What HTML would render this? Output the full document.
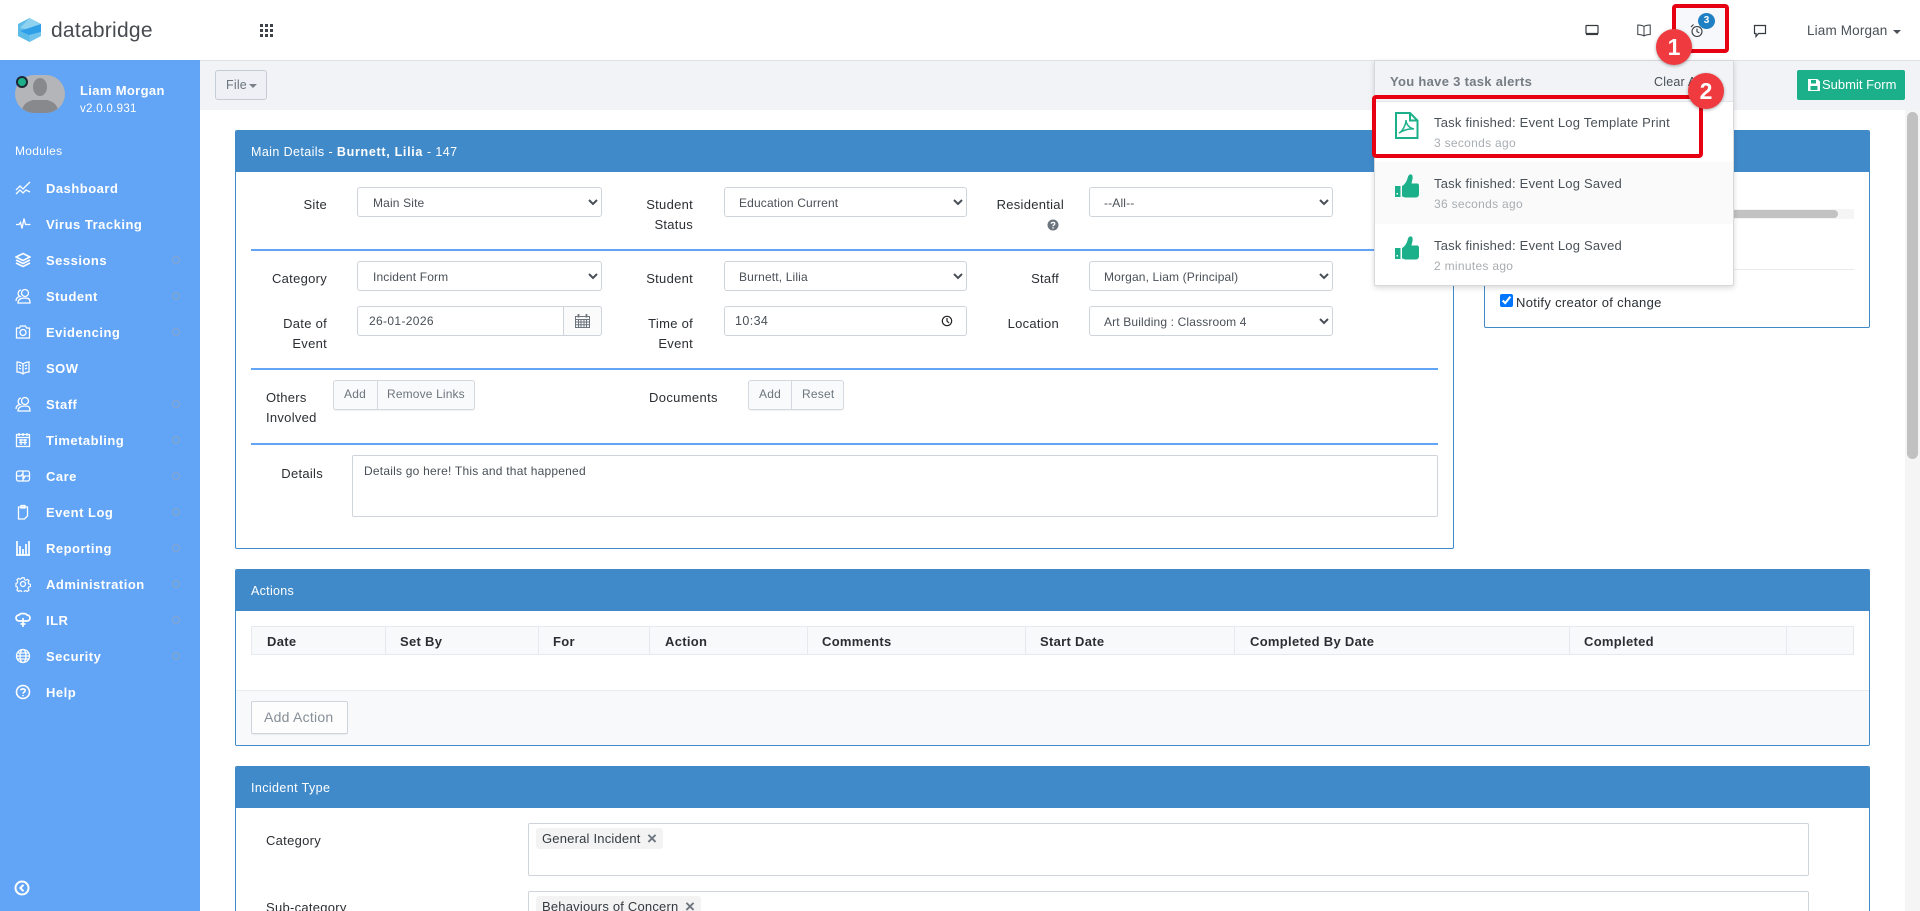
<!DOCTYPE html>
<html lang="en"><head><meta charset="utf-8"><title>databridge</title>
<style>
*{box-sizing:border-box}
html,body{margin:0;padding:0;width:1920px;height:911px;overflow:hidden;background:#fff;font-family:"Liberation Sans",Arial,sans-serif;font-size:13px;color:#212529}
#w{position:relative;width:1920px;height:911px;overflow:hidden}
.a{position:absolute}
.t{position:absolute;white-space:nowrap;line-height:16px;height:16px;margin-top:-7px;letter-spacing:.2px}
.l{color:#2b2f33;font-size:13px;letter-spacing:.28px}
.nav{color:#fff;font-weight:bold;font-size:13px;left:46px;letter-spacing:.5px}
.ic{position:absolute;left:15px;width:16px;height:16px;fill:none;stroke:#fff;stroke-width:1.3}
.dot{position:absolute;left:172px;width:8px;height:8px;border:1px solid #8aa5c9;border-radius:50%}
.panel{position:absolute;border:1px solid #418ac9;border-radius:2px;background:#fff;overflow:hidden}
.ph{position:absolute;left:0;top:0;right:0;height:41px;background:#418ac9}
.hr{position:absolute;height:2px;background:#62a4f5;left:251px;width:1187px}
select{position:absolute;height:30px;border:1px solid #ced4da;border-radius:3px;background:#fff;color:#495057;font:12px "Liberation Sans",Arial,sans-serif;letter-spacing:.15px;padding:2px 8px 0 10px}
.inp{position:absolute;height:30px;border:1px solid #ced4da;border-radius:3px;background:#fff}
.btn{position:absolute;height:30px;border:1px solid #d4d9df;border-radius:3px;background:#f9fafb;box-shadow:0 1px 1px rgba(0,0,0,.06)}
.sep{position:absolute;top:0;bottom:0;width:1px;background:#d4d9df}
.g{color:#6c757d;font-size:12px;margin-top:-8px}
.cell{position:absolute;top:0;height:27px;width:1px;background:#e6e9ee}
.th{font-weight:bold;color:#2b2f33;font-size:13px;top:641px;letter-spacing:.3px}
.tag{position:absolute;background:#f3f3f3;border-radius:3px;height:21px}
.box{position:absolute;left:528px;width:1281px;border:1px solid #ced4da;border-radius:2px;background:#fff}
.red{position:absolute;border:4px solid #e60012;border-radius:4px}
.num{position:absolute;width:36px;height:36px;border-radius:50%;background:#ef3b3f;color:#fff;font-weight:bold;font-size:23px;line-height:36px;text-align:center;box-shadow:0 1px 3px rgba(0,0,0,.35)}
.ti{font-size:13px;color:#495057;left:1434px;letter-spacing:.22px}
.tm{font-size:12px;color:#a9adb1;left:1434px;margin-top:-8px;letter-spacing:.3px}
.ph-t{color:#fff;font-size:12.5px;letter-spacing:.4px}
</style></head><body><div id="w">

<!-- header -->
<div class="a" style="left:0;top:0;width:1920px;height:61px;background:#fff;border-bottom:1px solid #dfe1e4"></div>
<svg class="a" style="left:17px;top:17px" width="25" height="26" viewBox="0 0 25 26">
<polygon points="12.5,1 24,7 24,19 12.5,25 1,19 1,7" fill="#5cbbe9"/>
<polygon points="12.5,1 24,7 15,13 3,11" fill="#8ed2ef"/>
<polygon points="3,14 24,7 24,15 12,18" fill="#2f9fe8"/>
<polygon points="12,18 24,15 24,19 12.5,25" fill="#6fc3ec"/>
</svg>
<div class="t" style="left:51px;top:30px;font-size:21px;color:#474b50;height:24px;line-height:24px;margin-top:-11px;letter-spacing:.25px">databridge</div>
<svg class="a" style="left:260px;top:24px" width="14" height="14" fill="#3d4348">
<rect x="0" y="0" width="3" height="3"/><rect x="5" y="0" width="3" height="3"/><rect x="10" y="0" width="3" height="3"/>
<rect x="0" y="5" width="3" height="3"/><rect x="5" y="5" width="3" height="3"/><rect x="10" y="5" width="3" height="3"/>
<rect x="0" y="10" width="3" height="3"/><rect x="5" y="10" width="3" height="3"/><rect x="10" y="10" width="3" height="3"/>
</svg>

<!-- sub bar -->
<div class="a" style="left:200px;top:61px;width:1720px;height:49px;background:#f1f3f7"></div>
<div class="a" style="left:215px;top:70px;width:52px;height:30px;background:#eef0f5;border:1px solid #c6ccd4;border-radius:3px"></div>
<div class="t g" style="left:226px;top:85px;font-size:12.5px">File</div>
<div class="a" style="left:249px;top:84px;border:4px solid transparent;border-top-color:#7a8087;border-bottom:0"></div>
<div class="a" style="left:1797px;top:70px;width:108px;height:30px;background:#1bb08a;border-radius:2px"></div>
<svg class="a" style="left:1808px;top:79px" width="12" height="12" viewBox="0 0 12 12" fill="#fff"><path fill-rule="evenodd" d="M0 0h9.5L12 2.5V12H0zM3 1v3.5h5V1zM2.500 7v4h7V7z"/></svg>
<div class="t" style="left:1822px;top:84px;color:#fff;font-size:13px;letter-spacing:0">Submit Form</div>

<!-- sidebar -->
<div class="a" style="left:0;top:60px;width:200px;height:851px;background:#62a4f5"></div>
<div class="a" style="left:15px;top:75px;width:50px;height:38px;background:#b3b5b8;border-radius:19px;overflow:hidden">
<svg width="50" height="38" viewBox="0 0 50 38" fill="#88898c"><ellipse cx="25" cy="12" rx="7" ry="9"/><path d="M7 38c0-8 4-11 11-13h14c7 2 11 5 11 13z"/></svg></div>
<div class="a" style="left:16px;top:76px;width:12px;height:12px;border-radius:50%;background:#1bb08a;border:2px solid #1d2733"></div>
<div class="t" style="left:80px;top:90px;color:#fff;font-weight:bold;font-size:13px;letter-spacing:.35px">Liam Morgan</div>
<div class="t" style="left:80px;top:108px;color:#fff;font-size:11.5px;letter-spacing:.3px">v2.0.0.931</div>
<div class="t" style="left:15px;top:150px;color:#fff;font-size:12px;letter-spacing:.3px">Modules</div>

<div class="t nav" style="top:188px">Dashboard</div>
<svg class="ic" style="top:180px" viewBox="0 0 16 16"><path d="M1 10l4-4 3 3 7-7M1 14l4-4 3 3 3-3 4 2"/></svg>
<div class="t nav" style="top:224px">Virus Tracking</div>
<svg class="ic" style="top:216px" viewBox="0 0 16 16"><path d="M1 8.500h3l1.500-2 1.500 6 2-10 1.500 6h5"/></svg>
<div class="t nav" style="top:260px">Sessions</div>
<svg class="ic" style="top:252px;stroke-width:1.6" viewBox="0 0 16 16"><path d="M8 1.500L15 5 8 8.500 1 5zM1 8l7 3.500L15 8M1 11l7 3.500 7-3.500"/></svg>
<div class="dot" style="top:256px"></div>
<div class="t nav" style="top:296px">Student</div>
<svg class="ic" style="top:288px" viewBox="0 0 16 16"><circle cx="10" cy="5" r="3.500"/><path d="M3 15c0-4 3-5 7-5s5 1 5 5zM6 2a3.500 3.500 0 0 0-1 6.500C2 9 1 11 1 13"/></svg>
<div class="dot" style="top:292px"></div>
<div class="t nav" style="top:332px">Evidencing</div>
<svg class="ic" style="top:324px" viewBox="0 0 16 16"><path d="M1.500 4h3l1-2h5l1 2h3v10h-13z"/><circle cx="8" cy="8.500" r="3"/></svg>
<div class="dot" style="top:328px"></div>
<div class="t nav" style="top:368px">SOW</div>
<svg class="ic" style="top:360px" viewBox="0 0 16 16"><path d="M8 4C6 2.500 4 2 2 2v10c2 0 4 .5 6 2 2-1.500 4-2 6-2V2c-2 0-4 .5-6 2zm0 0v10M4 5l2 1M4 8l2 1M10 6l2-1M10 9l2-1"/></svg>
<div class="t nav" style="top:404px">Staff</div>
<svg class="ic" style="top:396px" viewBox="0 0 16 16"><circle cx="10" cy="5" r="3.500"/><path d="M3 15c0-4 3-5 7-5s5 1 5 5zM6 2a3.500 3.500 0 0 0-1 6.500C2 9 1 11 1 13"/></svg>
<div class="dot" style="top:400px"></div>
<div class="t nav" style="top:440px">Timetabling</div>
<svg class="ic" style="top:432px" viewBox="0 0 16 16"><path d="M1.500 2.500h13v12h-13zM4 1v3M8 1v3M12 1v3M1.500 5.500h13M4 8h8M4 10.500h8M6 7v6M10 7v6"/></svg>
<div class="dot" style="top:436px"></div>
<div class="t nav" style="top:476px">Care</div>
<svg class="ic" style="top:468px" viewBox="0 0 16 16"><rect x="1.500" y="3" width="13" height="10" rx="2"/><path d="M1.500 8H6l1.500-2 1.500 4 1-2h4.500M8 3v10"/></svg>
<div class="dot" style="top:472px"></div>
<div class="t nav" style="top:512px">Event Log</div>
<svg class="ic" style="top:504px" viewBox="0 0 16 16"><path d="M3.500 3h9v9l-3 3h-6zM6 1.500h4V4H6z"/></svg>
<div class="dot" style="top:508px"></div>
<div class="t nav" style="top:548px">Reporting</div>
<svg class="ic" style="top:540px" viewBox="0 0 16 16"><path d="M2 1v14M5 6v9M8 9v6M11 4v11M14 1v14M1 15h14" stroke-width="1.700"/></svg>
<div class="dot" style="top:544px"></div>
<div class="t nav" style="top:584px">Administration</div>
<svg class="ic" style="top:576px" viewBox="0 0 16 16"><circle cx="8" cy="8" r="2.500"/><path d="M6.800 1h2.400l.4 2 1.700.8 1.800-1 1.600 1.700-1 1.700.7 1.800 2 .4v2.400l-2 .4-.7 1.700 1 1.800-1.700 1.600-1.700-1-1.800.7-.4 1.500H6.800l-.4-1.500-1.800-.7-1.700 1-1.700-1.600 1-1.800-.7-1.700-1.300-.4V7.300l1.300-.4.700-1.800-1-1.700 1.700-1.700 1.700 1 1.800-.8z" transform="translate(.8 .8) scale(.9)"/></svg>
<div class="dot" style="top:580px"></div>
<div class="t nav" style="top:620px">ILR</div>
<svg class="ic" style="top:612px;stroke-width:1.700" viewBox="0 0 16 16"><path d="M4 9a3 3 0 0 1 0-6c1-2 7-2 8 0a3 3 0 0 1 0 6zM8 6v9M5.500 12h5" /></svg>
<div class="dot" style="top:616px"></div>
<div class="t nav" style="top:656px">Security</div>
<svg class="ic" style="top:648px" viewBox="0 0 16 16"><circle cx="8" cy="8" r="6.500"/><ellipse cx="8" cy="8" rx="3" ry="6.500"/><path d="M1.500 8h13M2.500 5h11M2.500 11h11"/></svg>
<div class="dot" style="top:652px"></div>
<div class="t nav" style="top:692px">Help</div>
<svg class="ic" style="top:684px;stroke-width:1.600" viewBox="0 0 16 16"><circle cx="8" cy="8" r="6.500"/><path d="M5.800 6.300C6 4.500 10 4.500 10.200 6.500 10.300 8 8 8 8 9.800M8 11v1.200"/></svg>
<svg class="a" style="left:14px;top:880px" width="16" height="16" viewBox="0 0 16 16" fill="none" stroke="#fff" stroke-width="2"><circle cx="8" cy="8" r="6.500"/><path d="M9.500 4.800L6.300 8l3.200 3.200"/></svg>

<!-- main details panel -->
<div class="panel" style="left:235px;top:130px;width:1219px;height:419px"><div class="ph"></div></div>
<div class="t ph-t" style="left:251px;top:151px">Main Details - <b style="letter-spacing:.7px">Burnett, Lilia</b> - 147</div>

<div class="t l" style="right:1593px;top:204px">Site</div>
<select style="left:357px;top:187px;width:245px;padding-left:11px"><option>Main Site</option></select>
<div class="t l" style="right:1227px;top:204px">Student</div>
<div class="t l" style="right:1227px;top:224px">Status</div>
<select style="left:724px;top:187px;width:243px"><option>Education Current</option></select>
<div class="t l" style="right:856px;top:204px">Residential</div>
<svg class="a" style="left:1047px;top:219px" width="12" height="12" viewBox="0 0 12 12"><circle cx="6" cy="6" r="5.500" fill="#6c757d"/><path d="M4.200 4.700C4.400 3 7.800 3 7.800 4.800 7.800 6 6 6 6 7.300" fill="none" stroke="#fff" stroke-width="1.300"/><rect x="5.300" y="8.200" width="1.400" height="1.400" fill="#fff"/></svg>
<select style="left:1089px;top:187px;width:244px"><option>--All--</option></select>
<div class="hr" style="top:249px"></div>

<div class="t l" style="right:1593px;top:278px">Category</div>
<select style="left:357px;top:261px;width:245px;padding-left:11px"><option>Incident Form</option></select>
<div class="t l" style="right:1227px;top:278px">Student</div>
<select style="left:724px;top:261px;width:243px"><option>Burnett, Lilia</option></select>
<div class="t l" style="right:861px;top:278px">Staff</div>
<select style="left:1089px;top:261px;width:244px"><option>Morgan, Liam (Principal)</option></select>

<div class="t l" style="right:1593px;top:323px">Date of</div>
<div class="t l" style="right:1593px;top:343px">Event</div>
<div class="inp" style="left:357px;top:306px;width:245px"></div>
<div class="a" style="left:563px;top:306px;width:39px;height:30px;border:1px solid #ced4da;border-radius:0 3px 3px 0;background:#fbfbfc"></div>
<div class="t" style="left:369px;top:320px;color:#495057;font-size:12px;letter-spacing:.35px">26-01-2026</div>
<svg class="a" style="left:575px;top:314px" width="15" height="14" viewBox="0 0 15 14" fill="none" stroke="#6c757d" stroke-width="1"><path d="M.5 2.500h14v11H.5zM.5 5.500h14M.5 8h14M.5 10.800h14M3.500 5.500v8M6 5.500v8M9 5.500v8M11.500 5.500v8"/><path d="M3.500 0v3.500M11.500 0v3.500" stroke-width="1.800"/></svg>
<div class="t l" style="right:1227px;top:323px">Time of</div>
<div class="t l" style="right:1227px;top:343px">Event</div>
<div class="inp" style="left:724px;top:306px;width:243px"></div>
<div class="t" style="left:735px;top:320px;color:#495057;font-size:12.5px;letter-spacing:.4px">10:34</div>
<svg class="a" style="left:941px;top:315px" width="12" height="12" viewBox="0 0 12 12" fill="none" stroke="#222" stroke-width="1.200"><circle cx="6" cy="6" r="4.700"/><path d="M6 3v3l2 2"/></svg>
<div class="t l" style="right:861px;top:323px">Location</div>
<select style="left:1089px;top:306px;width:244px"><option>Art Building : Classroom 4</option></select>
<div class="hr" style="top:368px"></div>

<div class="t l" style="left:266px;top:397px">Others</div>
<div class="t l" style="left:266px;top:417px">Involved</div>
<div class="btn" style="left:333px;top:380px;width:142px"><div class="sep" style="left:43px"></div></div>
<div class="t g" style="left:344px;top:394px">Add</div>
<div class="t g" style="left:387px;top:394px;letter-spacing:.15px">Remove Links</div>
<div class="t l" style="left:649px;top:397px;letter-spacing:.35px">Documents</div>
<div class="btn" style="left:748px;top:380px;width:96px"><div class="sep" style="left:42px"></div></div>
<div class="t g" style="left:759px;top:394px">Add</div>
<div class="t g" style="left:802px;top:394px">Reset</div>
<div class="hr" style="top:443px"></div>

<div class="t l" style="right:1597px;top:473px">Details</div>
<div class="inp" style="left:352px;top:455px;width:1086px;height:62px;border-radius:2px"></div>
<div class="t" style="left:364px;top:470px;color:#495057;font-size:12px;letter-spacing:.22px">Details go here! This and that happened</div>

<!-- right panel -->
<div class="panel" style="left:1484px;top:130px;width:386px;height:198px"><div class="ph"></div></div>
<div class="a" style="left:1500px;top:209px;width:354px;height:10px;background:#f5f5f5"></div>
<div class="a" style="left:1500px;top:209px;width:338px;height:8px;margin-top:1px;background:#c2c2c2;border-radius:4px"></div>
<div class="a" style="left:1500px;top:269px;width:354px;height:1px;background:#e9ecef"></div>
<input type="checkbox" checked class="a" style="left:1500px;top:294px;width:13px;height:13px;margin:0">
<div class="t l" style="left:1516px;top:302px;letter-spacing:.32px">Notify creator of change</div>

<!-- actions panel -->
<div class="panel" style="left:235px;top:569px;width:1635px;height:177px"><div class="ph"></div>
<div class="a" style="left:0;right:0;top:120px;bottom:0;background:#f8f9fb;border-top:1px solid #e9ecef"></div></div>
<div class="t ph-t" style="left:251px;top:590px;letter-spacing:.3px">Actions</div>
<div class="a" style="left:251px;top:626px;width:1603px;height:29px;background:#f8f9fb;border:1px solid #e6e9ee">
<div class="cell" style="left:133px"></div><div class="cell" style="left:286px"></div><div class="cell" style="left:397px"></div><div class="cell" style="left:555px"></div><div class="cell" style="left:773px"></div><div class="cell" style="left:982px"></div><div class="cell" style="left:1317px"></div><div class="cell" style="left:1534px"></div></div>
<div class="t th" style="left:267px">Date</div>
<div class="t th" style="left:400px">Set By</div>
<div class="t th" style="left:553px">For</div>
<div class="t th" style="left:665px">Action</div>
<div class="t th" style="left:822px">Comments</div>
<div class="t th" style="left:1040px">Start Date</div>
<div class="t th" style="left:1250px">Completed By Date</div>
<div class="t th" style="left:1584px">Completed</div>
<div class="a" style="left:251px;top:701px;width:97px;height:33px;background:#fdfdfe;border:1px solid #ced4da;border-radius:2px;box-shadow:0 1px 1px rgba(0,0,0,.06)"></div>
<div class="t" style="left:264px;top:716px;color:#868e96;font-size:14px;letter-spacing:.25px">Add Action</div>

<!-- incident panel -->
<div class="panel" style="left:235px;top:766px;width:1635px;height:160px"><div class="ph"></div></div>
<div class="t ph-t" style="left:251px;top:787px">Incident Type</div>
<div class="t l" style="left:266px;top:840px">Category</div>
<div class="box" style="top:823px;height:53px"></div>
<div class="tag" style="left:536px;top:828px;width:127px"></div>
<div class="t" style="left:542px;top:838px;color:#343a40;font-size:13px;letter-spacing:.2px">General Incident</div>
<div class="t" style="left:647px;top:838px;color:#6c757d;font-size:17px;font-weight:bold">×</div>
<div class="t l" style="left:266px;top:907px">Sub-category</div>
<div class="box" style="top:891px;height:40px"></div>
<div class="tag" style="left:536px;top:896px;width:165px"></div>
<div class="t" style="left:542px;top:906px;color:#343a40;font-size:13px;letter-spacing:.2px">Behaviours of Concern</div>
<div class="t" style="left:685px;top:906px;color:#6c757d;font-size:17px;font-weight:bold">×</div>

<!-- scrollbar -->
<div class="a" style="left:1905px;top:110px;width:15px;height:801px;background:#f5f5f5"></div>
<div class="a" style="left:1907px;top:112px;width:11px;height:347px;background:#c1c1c1;border-radius:6px"></div>

<!-- nav icons -->
<svg class="a" style="left:1585px;top:24px" width="14" height="12" viewBox="0 0 14 12" fill="none" stroke="#343a40" stroke-width="1.200"><rect x="1" y="1.500" width="12" height="8" rx=".5"/><path d="M1 10.500h12"/></svg>
<svg class="a" style="left:1637px;top:24px" width="14" height="13" viewBox="0 0 14 13" fill="none" stroke="#343a40" stroke-width="1"><path d="M7 2.500C5.500 1.500 3 1 .8 1v9.500c2.200 0 4.700.5 6.200 1.500 1.500-1 4-1.500 6.200-1.500V1C11 1 8.500 1.500 7 2.500zm0 0V12"/></svg>
<div class="a" style="left:1672px;top:4px;width:57px;height:49px;background:#f7f8fb"></div>
<svg class="a" style="left:1690px;top:23px" width="14" height="15" viewBox="0 0 14 15" fill="none" stroke="#343a40" stroke-width="1.100"><circle cx="7" cy="8.500" r="5"/><path d="M7 5.500v3.200l2.300 1M1 4l2.500-2.500M13 4l-2.500-2.500"/></svg>
<div class="a" style="left:1698px;top:13px;width:17px;height:16px;border-radius:50%;background:#1f80c4;color:#fff;font-size:10px;font-weight:bold;text-align:center;line-height:16px">3</div>
<svg class="a" style="left:1753px;top:24px" width="14" height="14" viewBox="0 0 14 14" fill="none" stroke="#343a40" stroke-width="1.200"><path d="M1.500 1.500h11v8H5.500l-2.500 3v-3H1.500z"/></svg>
<div class="t" style="left:1807px;top:30px;color:#495057;font-size:13.500px;letter-spacing:.15px">Liam Morgan</div>
<div class="a" style="left:1893px;top:30px;border:4px solid transparent;border-top-color:#495057;border-bottom:0"></div>

<!-- dropdown -->
<div class="a" style="left:1374px;top:60px;width:360px;height:226px;background:#fff;border:1px solid #d6d8db;border-radius:2px;box-shadow:0 2px 6px rgba(0,0,0,.15)"></div>
<div class="a" style="left:1375px;top:61px;width:358px;height:41px;background:#f1f3f7;border-bottom:1px solid #e4e6ea"></div>
<div class="a" style="left:1375px;top:162px;width:358px;height:62px;background:#fafafa"></div>
<div class="t" style="left:1390px;top:81px;font-weight:bold;color:#757c83;font-size:13px;letter-spacing:.3px">You have 3 task alerts</div>
<div class="t" style="left:1654px;top:81px;color:#495057;font-size:12.500px">Clear All</div>
<svg class="a" style="left:1395px;top:112px" width="24" height="27" viewBox="0 0 24 27" fill="none" stroke="#1bb08a" stroke-width="2"><path d="M1 1h14l7.500 7.500V26H1zM15 1v7.500h7.500"/><path d="M4 21c3-1 7-8 7-13 0 4 3 8 8 9-5-.5-10 1-15 4z" stroke-width="1.500"/></svg>
<div class="t ti" style="top:122px">Task finished: Event Log Template Print</div>
<div class="t tm" style="top:143px">3 seconds ago</div>
<svg class="a" style="left:1394px;top:174px" width="25" height="24" viewBox="0 0 25 24" fill="#1bb08a"><path d="M1 12h5.500v11H1z"/><path d="M8 12c3-1.500 5-5 6-9.500C15 0 18-.5 18.500 2c.5 2.500-.5 5-1 7.500h5.500c1.500 0 2 1 2 2.500v8c0 2.500-1.500 3.500-3.500 3.500H12c-2 0-2.500-1-4-1z"/><rect x="2.500" y="19" width="1.500" height="1.500" fill="#fff"/></svg>
<div class="t ti" style="top:183px">Task finished: Event Log Saved</div>
<div class="t tm" style="top:204px">36 seconds ago</div>
<svg class="a" style="left:1394px;top:236px" width="25" height="24" viewBox="0 0 25 24" fill="#1bb08a"><path d="M1 12h5.500v11H1z"/><path d="M8 12c3-1.500 5-5 6-9.500C15 0 18-.5 18.500 2c.5 2.500-.5 5-1 7.500h5.500c1.500 0 2 1 2 2.500v8c0 2.500-1.500 3.500-3.500 3.500H12c-2 0-2.500-1-4-1z"/><rect x="2.500" y="19" width="1.500" height="1.500" fill="#fff"/></svg>
<div class="t ti" style="top:245px">Task finished: Event Log Saved</div>
<div class="t tm" style="top:266px">2 minutes ago</div>

<!-- annotations -->
<div class="red" style="left:1672px;top:4px;width:57px;height:49px"></div>
<div class="red" style="left:1372px;top:95px;width:331px;height:63px"></div>
<div class="num" style="left:1656px;top:29px">1</div>
<div class="num" style="left:1688px;top:73px">2</div>
</div></body></html>
